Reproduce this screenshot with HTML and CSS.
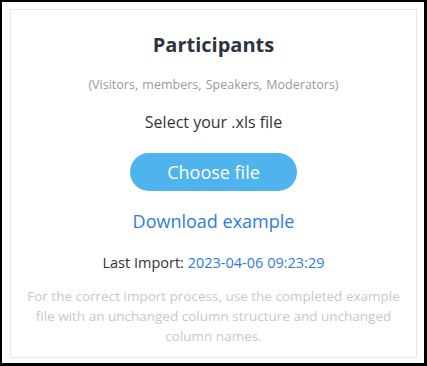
FILE: index.html
```html
<!DOCTYPE html>
<html lang="en">

<head>
  <meta charset="UTF-8">
  <meta name="viewport" content="width=device-width, initial-scale=1.0">
  <title>Import participants</title>
  <link rel="stylesheet" href="styles.css">
</head>

<body>
  <div class="frame">
    <div class="import-card">
      <h2 class="title">Participants</h2>
      <p class="subtitle">(Visitors, members, Speakers, Moderators)</p>
      <p class="select-label">Select your .xls file</p>
      <button class="choose-btn">Choose file</button>
      <a class="download-link" href="#">Download example</a>
      <p class="last-import">Last Import: <span class="date">2023-04-06 09:23:29</span></p>
      <p class="hint">For the correct import process, use the completed example file with an unchanged column structure and unchanged column names.</p>
    </div>
  </div>
</body>

</html>
```

FILE: styles.css
```css
* {
  box-sizing: border-box;
}

body {
  margin: 0;
  font-family: 'Open Sans', 'Noto Sans', sans-serif;
  background: #ffffff;
}

.frame {
  width: 427px;
  height: 366px;
  border-style: solid;
  border-color: #000000;
  border-width: 2px 3px 3px 2px;
  padding: 7px 7px 5px 8px;
  background: #ffffff;
}

.import-card {
  height: 100%;
  border: 1px solid #e6e6e6;
  display: flex;
  flex-direction: column;
  align-items: center;
  text-align: center;
  padding: 22px 10px 0;
}

.title {
  margin: 0;
  font-size: 20px;
  font-weight: 700;
  color: #2b3442;
  line-height: 26px;
}

.subtitle {
  margin: 19px 0 0;
  font-size: 12.5px;
  color: #9a9a9a;
  line-height: 16px;
  word-spacing: 1px;
}

.select-label {
  margin: 18px 0 0;
  font-size: 16px;
  color: #333333;
  line-height: 22px;
}

.choose-btn {
  margin-top: 20px;
  width: 167px;
  height: 38px;
  border: none;
  border-radius: 19px;
  background: #4fb3ee;
  color: #ffffff;
  font-family: inherit;
  font-size: 18px;
  cursor: pointer;
}

.download-link {
  margin-top: 18px;
  font-size: 18px;
  color: #2d7ddf;
  text-decoration: none;
  line-height: 24px;
}

.last-import {
  margin: 20px 0 0;
  font-size: 14.5px;
  color: #333333;
  line-height: 20px;
}

.last-import .date {
  color: #2d7ddf;
}

.hint {
  margin: 13px 0 0;
  font-size: 13.5px;
  color: #c8c8c8;
  line-height: 20px;
}
```
